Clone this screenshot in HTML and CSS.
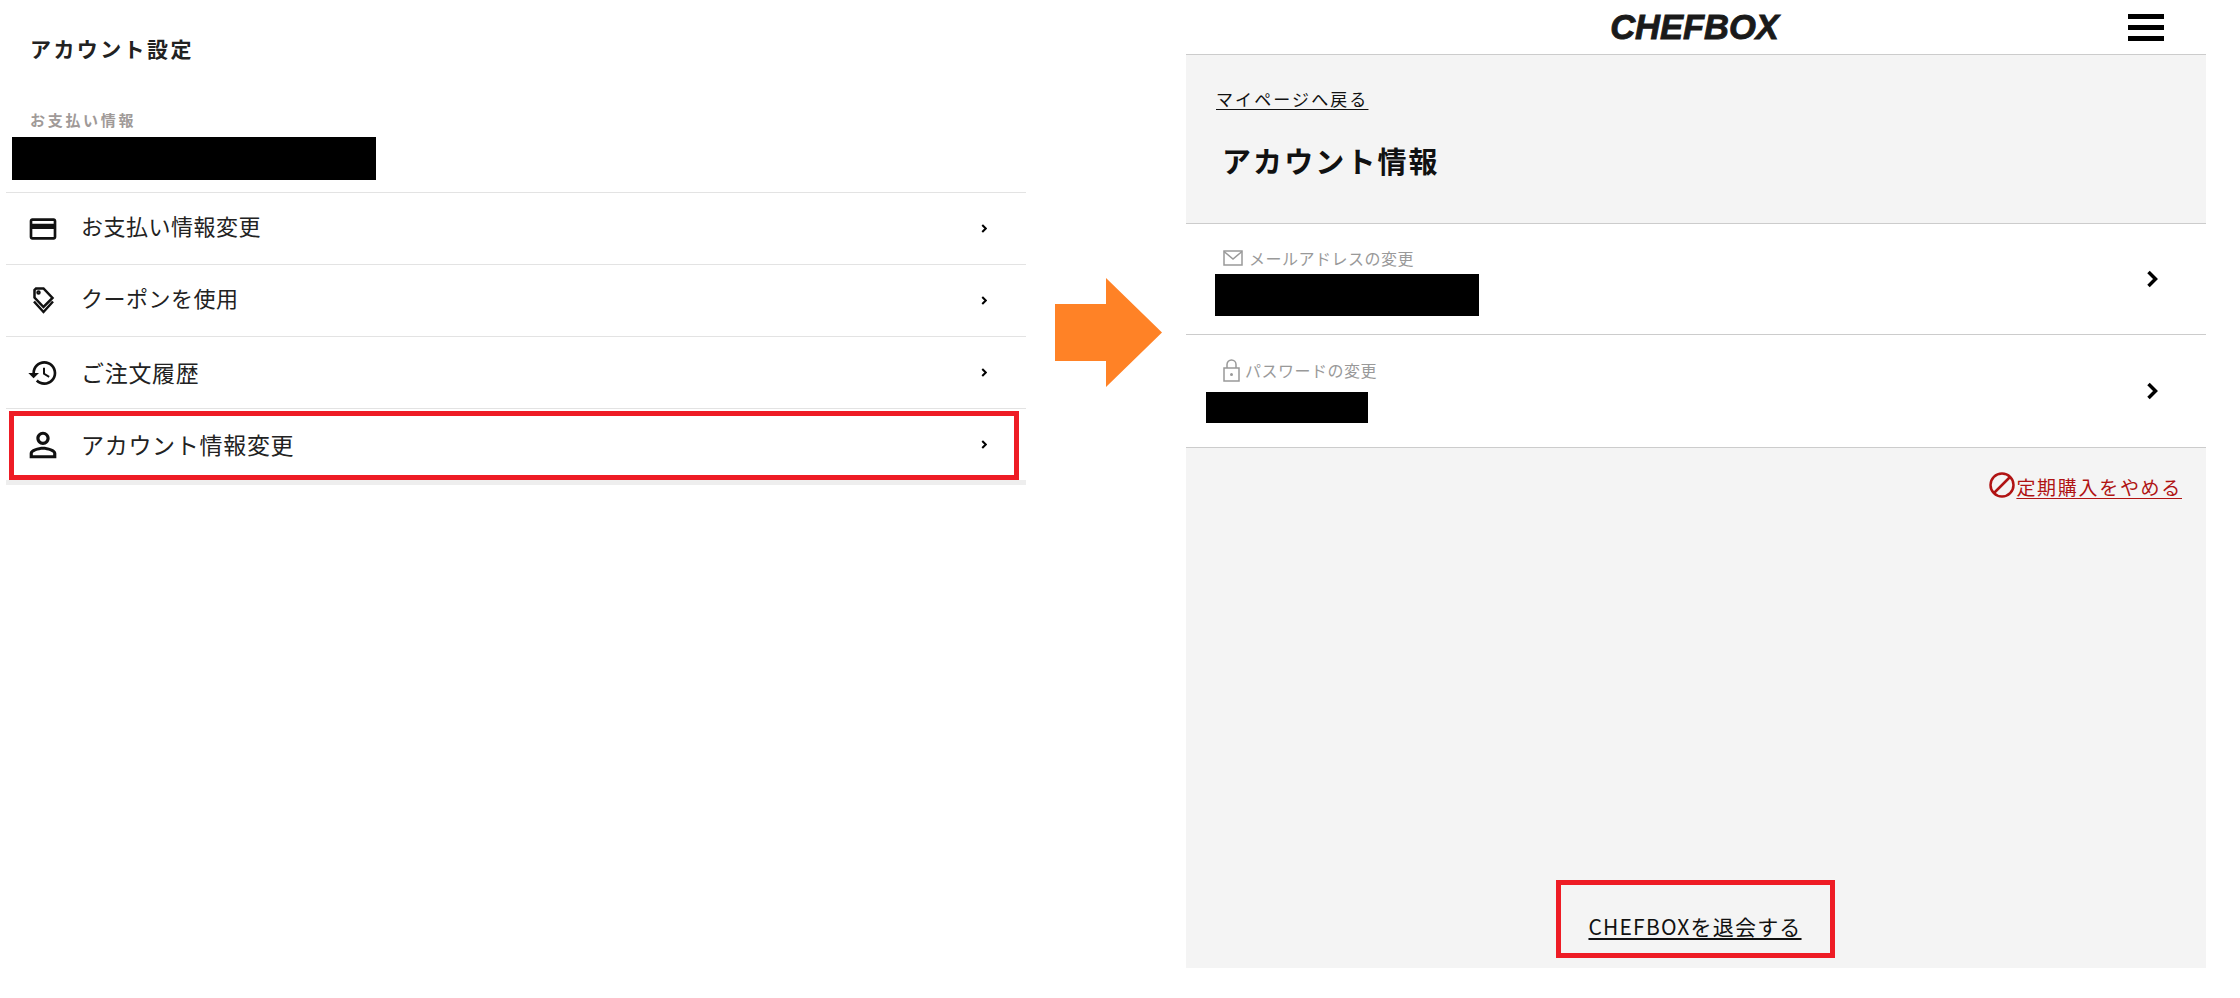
FILE: index.html
```html
<!DOCTYPE html>
<html lang="ja">
<head>
    <meta charset="UTF-8">
    <meta name="viewport" content="width=device-width, initial-scale=1.0">
    <title>アカウント情報</title>
    <link rel="stylesheet" href="styles.css">
</head>
<body>
    <div class="page">
        <section class="settings">
            <h2 class="settings-title">アカウント設定</h2>
            <div class="pay-label">お支払い情報</div>
            <div class="redact redact-pay"></div>

            <a class="menu-row">
                <svg class="menu-icon" viewBox="0 0 24 24"><path d="M20 4H4c-1.11 0-1.99.89-1.99 2L2 18c0 1.11.89 2 2 2h16c1.11 0 2-.89 2-2V6c0-1.11-.89-2-2-2zm0 14H4v-6h16v6zm0-10H4V6h16v2z"/></svg>
                <span>お支払い情報変更</span>
                <svg class="menu-chevron" viewBox="0 0 12 18"><path d="M2.5 2l7 7-7 7"/></svg>
            </a>
            <a class="menu-row">
                <svg class="menu-icon coupon" viewBox="0 0 32 32"><path d="M9 3.500h7.500L25.500 13 16.500 22 7.500 12.500V5z"/><path d="M7 16.500L16.500 27 26 16.500"/><circle cx="11.500" cy="7.500" r="1"/></svg>
                <span>クーポンを使用</span>
                <svg class="menu-chevron" viewBox="0 0 12 18"><path d="M2.5 2l7 7-7 7"/></svg>
            </a>
            <a class="menu-row menu-row-large">
                <svg class="menu-icon" viewBox="0 0 24 24"><path d="M13 3c-4.970 0-9 4.030-9 9H1l3.890 3.890.07.14L9 12H6c0-3.870 3.130-7 7-7s7 3.130 7 7-3.130 7-7 7c-1.930 0-3.680-.79-4.940-2.060l-1.420 1.420C8.270 19.990 10.510 21 13 21c4.970 0 9-4.030 9-9s-4.030-9-9-9zm-1 5v5l4.280 2.540.72-1.210-3.500-2.080V8H12z"/></svg>
                <span>ご注文履歴</span>
                <svg class="menu-chevron" viewBox="0 0 12 18"><path d="M2.5 2l7 7-7 7"/></svg>
            </a>
            <a class="menu-row menu-row-large menu-row-marked">
                <svg class="menu-icon person" viewBox="0 0 24 24"><path d="M12 5.900c1.160 0 2.100.94 2.100 2.100s-.94 2.100-2.100 2.100S9.900 9.160 9.900 8s.94-2.100 2.100-2.100m0 9c2.970 0 6.100 1.460 6.100 2.100v1.100H5.900V17c0-.64 3.130-2.100 6.100-2.100M12 4C9.790 4 8 5.790 8 8s1.790 4 4 4 4-1.790 4-4-1.790-4-4-4zm0 9c-2.670 0-8 1.340-8 4v3h16v-3c0-2.660-5.330-4-8-4z"/></svg>
                <span>アカウント情報変更</span>
                <svg class="menu-chevron" viewBox="0 0 12 18"><path d="M2.5 2l7 7-7 7"/></svg>
            </a>
        </section>

        <svg class="next-arrow" viewBox="0 0 107 109"><path d="M0 26h51V0l56 54.500-56 54.500V83H0z"/></svg>

        <section class="account">
            <header class="topbar">
                <span></span>
                <div class="logo">CHEFBOX</div>
                <div class="burger"><i></i><i></i><i></i></div>
            </header>

            <div class="intro">
                <a class="back-link">マイページへ戻る</a>
                <h1 class="account-title">アカウント情報</h1>
            </div>

            <a class="info-row info-row-mail">
                <div class="info-body">
                    <div class="info-label">
                        <svg class="mail-icon" viewBox="0 0 20 16"><path d="M1 1h18v14H1z"/><path d="M1 1.500l9 7.500 9-7.500"/></svg>
                        メールアドレスの変更
                    </div>
                    <div class="redact redact-mail"></div>
                </div>
                <svg class="info-chevron" viewBox="0 0 12 18"><path d="M2.500 2l7 7-7 7"/></svg>
            </a>
            <a class="info-row info-row-pass">
                <div class="info-body">
                    <div class="info-label">
                        <svg class="lock-icon" viewBox="0 0 17 23"><path d="M1 9h15v13H1z"/><path d="M4 9V5.500a4.500 4.500 0 0 1 9 0V9"/><circle cx="8.500" cy="15.500" r="1.500"/></svg>
                        パスワードの変更
                    </div>
                    <div class="redact redact-pass"></div>
                </div>
                <svg class="info-chevron" viewBox="0 0 12 18"><path d="M2.500 2l7 7-7 7"/></svg>
            </a>

            <div class="stop-row">
                <svg class="stop-icon" viewBox="0 0 26 26"><circle cx="13" cy="13" r="11.500"/><path d="M5 21L21 5"/></svg>
                <a class="stop-link">定期購入をやめる</a>
            </div>

            <div class="leave-row">
                <div class="leave-box"><a class="leave-link">CHEFBOXを退会する</a></div>
            </div>
        </section>
    </div>
</body>
</html>
```

FILE: styles.css
```css
body {
    margin: 0;
    background-color: #fff;
    color: #222;
    font-family: "Noto Sans CJK JP", "Noto Sans", sans-serif;
}
.page {
    display: flex;
    align-items: flex-start;
    height: 998px;
    overflow: hidden;
}
.redact {
    background-color: #000;
}

/* left panel */
.settings {
    width: 1020px;
    margin-left: 6px;
}
.settings-title {
    margin: 0;
    padding-left: 24px;
    height: 100px;
    line-height: 96px;
    font-size: 21px;
    font-weight: 700;
    letter-spacing: 2.400px;
    color: #222;
}
.pay-label {
    padding: 3px 0 0 24px;
    height: 34px;
    line-height: 34px;
    font-size: 15px;
    font-weight: 700;
    letter-spacing: 2.700px;
    color: #a09a98;
}
.redact-pay {
    margin: 0 0 12px 6px;
    width: 364px;
    height: 43px;
}
.menu-row {
    display: flex;
    align-items: center;
    box-sizing: border-box;
    height: 72px;
    padding: 0 39px 0 21px;
    border-top: 1px solid #e3e3e3;
    font-size: 22px;
    letter-spacing: 0.5px;
    color: #222;
}
.menu-row span {
    margin-bottom: 7px;
}
.menu-row-large {
    font-size: 23px;
    letter-spacing: 0.7px;
}
.menu-row-large span {
    margin-bottom: 1px;
}
.menu-row-marked {
    position: relative;
    height: 77px;
    border-bottom: 5px solid #eee;
}
.menu-row-marked::after {
    content: "";
    position: absolute;
    left: 3px;
    top: 2px;
    width: 1010px;
    height: 69px;
    box-sizing: border-box;
    border: 5px solid #ee1c25;
}
.menu-icon {
    width: 32px;
    height: 32px;
    margin-right: 22px;
    fill: #111;
}
.menu-icon.coupon {
    fill: none;
    stroke: #111;
    stroke-width: 2.500;
}
.menu-icon.person {
    width: 40px;
    height: 40px;
    margin: 0 18px 0 -4px;
}
.menu-chevron {
    margin-left: auto;
    width: 6px;
    height: 9px;
    fill: none;
    stroke: #000;
    stroke-width: 4;
}

/* arrow between the two screens */
.next-arrow {
    flex: none;
    width: 107px;
    height: 109px;
    margin: 278px 24px 0 29px;
    fill: #ff8226;
}

/* right panel */
.account {
    display: flex;
    flex-direction: column;
    width: 1020px;
    height: 968px;
    background-color: #f4f4f4;
}
.topbar {
    display: grid;
    grid-template-columns: 1fr auto 1fr;
    align-items: center;
    height: 54px;
    background-color: #fff;
    border-bottom: 1px solid #ccc;
}
.logo {
    margin-right: 3px;
    font-family: "Liberation Sans", sans-serif;
    font-size: 34.500px;
    font-style: italic;
    font-weight: 700;
    line-height: 44px;
    color: #1a1a1a;
    -webkit-text-stroke: 0.9px #1a1a1a;
}
.burger {
    justify-self: end;
    display: flex;
    flex-direction: column;
    gap: 6px;
    margin-right: 42px;
}
.burger i {
    display: block;
    width: 36px;
    height: 5px;
    background-color: #000;
}
.intro {
    height: 168px;
    padding-left: 30px;
}
.back-link {
    display: block;
    width: fit-content;
    margin-top: 31px;
    line-height: 26px;
    font-size: 17px;
    letter-spacing: 2.100px;
    color: #111;
    text-decoration: underline;
    text-underline-offset: 3px;
}
.account-title {
    margin: 26px 0 0 6px;
    line-height: 44px;
    font-size: 29px;
    font-weight: 700;
    letter-spacing: 2.100px;
    color: #111;
}
.info-row {
    display: flex;
    align-items: center;
    padding-left: 37px;
    padding-right: 48px;
    background-color: #fff;
    border-top: 1px solid #ccc;
}
.info-row-mail .info-body {
    padding: 22px 0 18px;
}
.info-row-pass {
    border-bottom: 1px solid #ccc;
}
.info-row-pass .info-body {
    padding: 23px 0 24px;
}
.info-row-pass .info-label {
    gap: 5px;
}
.info-label {
    display: flex;
    align-items: center;
    gap: 6px;
    height: 24px;
    font-size: 16px;
    letter-spacing: 0.500px;
    color: #999;
}
.mail-icon {
    width: 20px;
    height: 16px;
    fill: none;
    stroke: #999;
    stroke-width: 1.500;
}
.lock-icon {
    width: 17px;
    height: 23px;
    fill: none;
    stroke: #999;
    stroke-width: 1.500;
}
.lock-icon circle {
    fill: #999;
    stroke: none;
}
.redact-mail {
    margin: 4px 0 0 -8px;
    width: 264px;
    height: 42px;
}
.redact-pass {
    margin: 10px 0 0 -17px;
    width: 162px;
    height: 31px;
}
.info-chevron {
    margin-left: auto;
    width: 12px;
    height: 18px;
    fill: none;
    stroke: #000;
    stroke-width: 3.500;
}
.stop-row {
    display: flex;
    justify-content: flex-end;
    align-items: center;
    gap: 1px;
    padding: 21px 24px 0 0;
}
.stop-icon {
    width: 26px;
    height: 26px;
    fill: none;
    stroke: #b01313;
    stroke-width: 2.500;
}
.stop-link {
    font-size: 19px;
    letter-spacing: 1.700px;
    line-height: 26px;
    color: #b01313;
    text-decoration: underline;
    text-underline-offset: 3px;
    margin-top: 5px;
}
.leave-row {
    display: flex;
    justify-content: center;
    margin-top: auto;
    padding-bottom: 10px;
}
.leave-box {
    box-sizing: border-box;
    width: 279px;
    height: 78px;
    margin-right: 2px;
    padding-top: 27px;
    border: 5px solid #ee1c25;
    text-align: center;
}
.leave-link {
    font-size: 21px;
    letter-spacing: 1.200px;
    line-height: 28px;
    color: #111;
    text-decoration: underline;
    text-decoration-thickness: 2px;
    text-underline-offset: 3px;
}
```
